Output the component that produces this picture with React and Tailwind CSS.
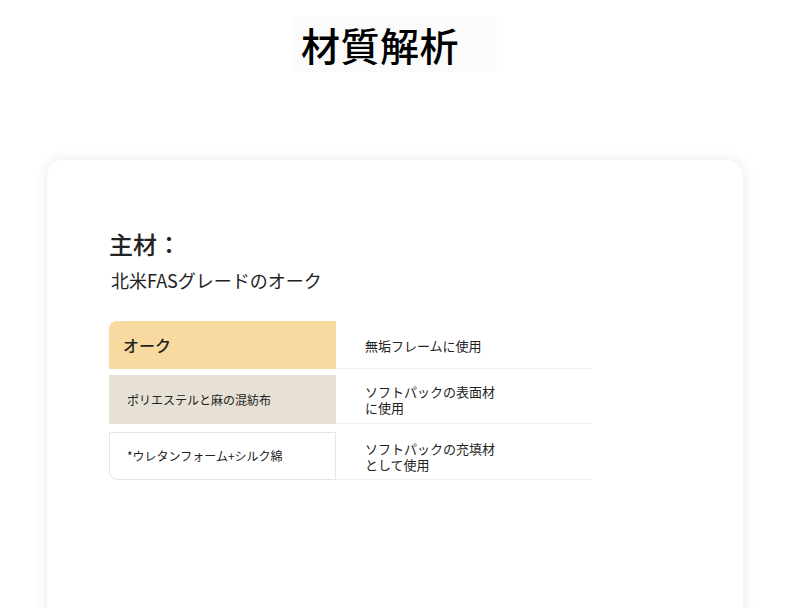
import React from 'react';

const rows = [
  {
    name: 'オーク',
    use: '無垢フレームに使用',
    cell: 'bg-[#f8daa0] rounded-tl-lg text-[16px] font-medium pl-[14px]',
    wrap: 'h-[48px]',
  },
  {
    name: 'ポリエステルと麻の混紡布',
    use: 'ソフトパックの表面材に使用',
    cell: 'bg-[#e6e0d5] text-[12px] pl-[18px]',
    wrap: 'h-[49px] mt-[6px]',
  },
  {
    name: '*ウレタンフォーム+シルク綿',
    use: 'ソフトパックの充填材として使用',
    cell: 'bg-white border border-[#e6e6e6] rounded-bl-lg text-[12px] pl-[17px]',
    wrap: 'h-[48px] mt-[8px]',
  },
];

const App = () => {
  return (
    <div
      className="h-screen bg-white overflow-hidden"
      style={{ fontFamily: '"Noto Sans CJK JP", "Noto Sans", sans-serif' }}
    >
      {/* Title */}
      <div className="flex justify-center pt-[17px]">
        <div className="w-[204px] h-[55px] bg-[#fbfbfb] pl-[8px] flex items-center">
          <h1 className="text-[39px] leading-none font-medium text-black tracking-[0.5px]">材質解析</h1>
        </div>
      </div>

      {/* Card */}
      <div className="mx-[47px] mt-[88px] h-[520px] bg-white rounded-2xl shadow-[0_0_14px_rgba(0,0,0,0.09)] pl-[62px] pt-[66px]">
        <h2 className="text-[24px] font-medium text-[#222] leading-[36px]">主材：</h2>
        <p className="text-[18px] text-[#222] mt-[5px] ml-[2px] leading-[26px]">北米FASグレードのオーク</p>

        <div className="mt-[28px] w-[483px]">
          {rows.map((row) => (
            <div key={row.name} className={`flex ${row.wrap}`}>
              <div className={`w-[227px] flex items-center text-[#222] ${row.cell}`}>{row.name}</div>
              <div className="flex-1 flex items-center border-b border-[#eeeeee] pl-[29px]">
                <p className="max-w-[134px] text-[13px] leading-[16px] text-[#222] pt-[2px]">{row.use}</p>
              </div>
            </div>
          ))}
        </div>
      </div>
    </div>
  );
};

export default App;
